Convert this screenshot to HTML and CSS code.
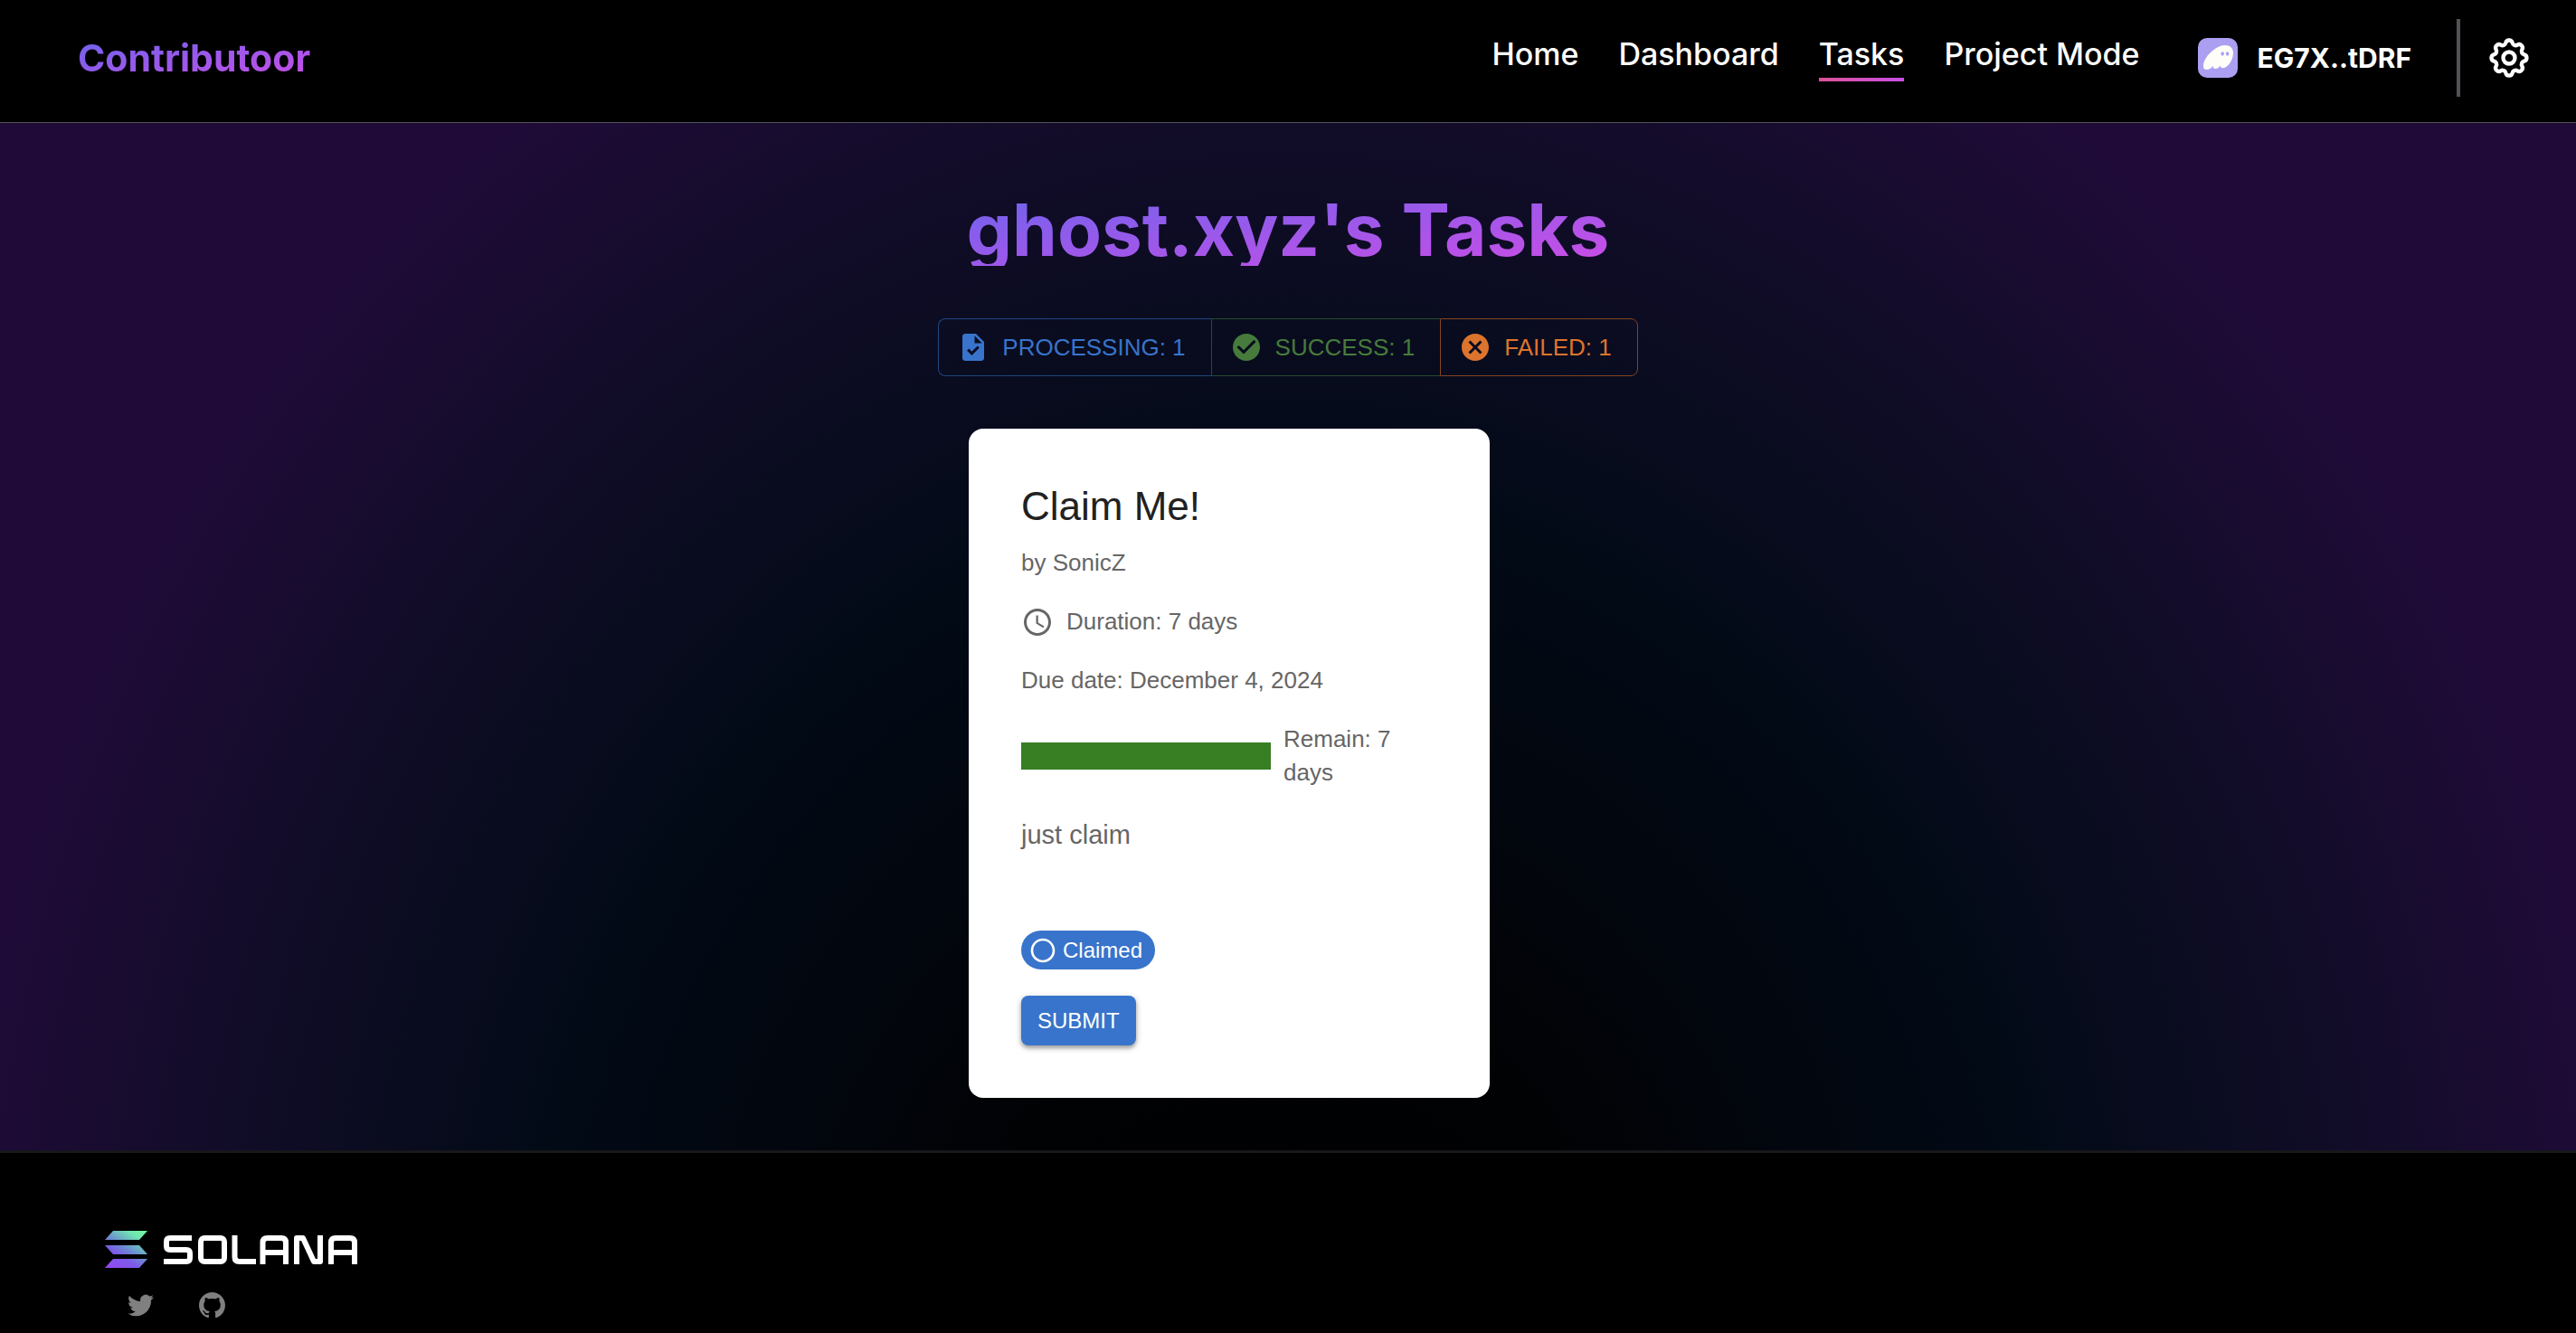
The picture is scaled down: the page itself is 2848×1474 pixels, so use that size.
FILE: index.html
```html
<!DOCTYPE html>
<html lang="en">
<head>
<meta charset="utf-8">
<meta name="viewport" content="width=device-width, initial-scale=1">
<title>Contributoor</title>
<link rel="stylesheet" href="styles.css">
</head>
<body>
<header class="header">
  <a class="brand gradient-text" href="#">Contributoor</a>
  <div class="header-right">
    <nav class="nav">
      <a href="#">Home</a>
      <a href="#">Dashboard</a>
      <a href="#" class="active">Tasks</a>
      <a href="#">Project Mode</a>
    </nav>
    <button class="wallet" type="button">
      <svg class="wallet-icon" viewBox="0 0 44 44" aria-hidden="true">
        <rect width="44" height="44" rx="10" fill="#ab9ff2"/>
        <path fill="#fffdf8" fill-rule="evenodd" d="M30 8C20 8 6 21 6 31c0 3 1.500 4 4 4 3 0 5.500-2.200 7-4.500-.6 2.500.5 3.500 2.500 3.500s4-1.500 5.200-3.500c.1 2 1.300 2.700 3 2.700C33.500 33 39 24 39 16.500 39 11 35.500 8 30 8Zm-2.800 7.200c1 0 1.700.9 1.700 2.200s-.7 2.200-1.700 2.200-1.700-.9-1.700-2.200.7-2.200 1.700-2.200Zm5.500 0c1 0 1.700.9 1.700 2.200s-.7 2.200-1.700 2.200-1.700-.9-1.700-2.200.7-2.200 1.700-2.200Z"/>
      </svg>
      <span>EG7X..tDRF</span>
    </button>
    <span class="divider"></span>
    <button class="icon-button" type="button" aria-label="Settings">
      <svg viewBox="0 0 24 24" fill="none" stroke="currentColor" stroke-width="2" stroke-linecap="round" stroke-linejoin="round"><path d="M10.325 4.317c.426-1.756 2.924-1.756 3.350 0a1.724 1.724 0 002.573 1.066c1.543-.94 3.310.826 2.370 2.370a1.724 1.724 0 001.065 2.572c1.756.426 1.756 2.924 0 3.350a1.724 1.724 0 00-1.066 2.573c.94 1.543-.826 3.310-2.370 2.370a1.724 1.724 0 00-2.572 1.065c-.426 1.756-2.924 1.756-3.350 0a1.724 1.724 0 00-2.573-1.066c-1.543.94-3.310-.826-2.370-2.370a1.724 1.724 0 00-1.065-2.572c-1.756-.426-1.756-2.924 0-3.350a1.724 1.724 0 001.066-2.573c-.94-1.543.826-3.310 2.370-2.370.996.608 2.296.07 2.572-1.065z"/><circle cx="12" cy="12" r="3"/></svg>
    </button>
  </div>
</header>

<main class="main">
  <h1 class="title gradient-text">ghost.xyz's Tasks</h1>
  <div class="filters" role="group" aria-label="Task status">
    <button class="filter processing" type="button">
      <svg viewBox="0 0 24 24" fill="currentColor" aria-hidden="true"><path d="M14 2H6c-1.100 0-1.990.9-1.990 2L4 20c0 1.100.89 2 1.990 2H18c1.100 0 2-.9 2-2V8l-6-6zm-3.060 16L7.400 14.460l1.410-1.410 2.120 2.120 4.240-4.240 1.410 1.410L10.940 18zM13 9V3.500L18.500 9H13z"/></svg>
      PROCESSING: 1
    </button>
    <button class="filter success" type="button">
      <svg viewBox="0 0 24 24" fill="currentColor" aria-hidden="true"><path d="M12 2C6.480 2 2 6.480 2 12s4.480 10 10 10 10-4.480 10-10S17.520 2 12 2zm-2 15l-5-5 1.410-1.410L10 14.170l7.590-7.590L19 8l-9 9z"/></svg>
      SUCCESS: 1
    </button>
    <button class="filter failed" type="button">
      <svg viewBox="0 0 24 24" fill="currentColor" aria-hidden="true"><path d="M12 2C6.470 2 2 6.470 2 12s4.470 10 10 10 10-4.470 10-10S17.530 2 12 2zm5 13.590L15.590 17 12 13.410 8.410 17 7 15.590 10.590 12 7 8.410 8.410 7 12 10.590 15.590 7 17 8.410 13.410 12 17 15.590z"/></svg>
      FAILED: 1
    </button>
  </div>
  <section class="cards">
    <article class="card">
      <h2>Claim Me!</h2>
      <p class="author">by SonicZ</p>
      <p class="duration">
        <svg viewBox="0 0 24 24" fill="currentColor" aria-hidden="true"><path d="M11.990 2C6.470 2 2 6.480 2 12s4.470 10 9.990 10C17.520 22 22 17.520 22 12S17.520 2 11.990 2zM12 20c-4.420 0-8-3.580-8-8s3.580-8 8-8 8 3.580 8 8-3.580 8-8 8zm.5-13H11v6l5.250 3.150.75-1.230-4.500-2.670z"/></svg>
        Duration: 7 days
      </p>
      <p class="due">Due date: December 4, 2024</p>
      <div class="remaining">
        <div class="track"><div class="fill" style="width:100%"></div></div>
        <p>Remain: 7 days</p>
      </div>
      <p class="description">just claim</p>
      <span class="chip">
        <svg viewBox="0 0 24 24" fill="currentColor" aria-hidden="true"><path d="M12 2C6.480 2 2 6.480 2 12s4.480 10 10 10 10-4.480 10-10S17.520 2 12 2zm0 18c-4.420 0-8-3.580-8-8s3.580-8 8-8 8 3.580 8 8-3.580 8-8 8z"/></svg>
        Claimed
      </span>
      <button class="submit" type="button">SUBMIT</button>
    </article>
  </section>
</main>

<footer class="footer">
  <a class="solana" href="#" aria-label="Solana">
    <svg viewBox="0 0 280 42" fill="none">
      <defs><linearGradient id="sol" gradientUnits="userSpaceOnUse" x1="40" y1="-3" x2="10" y2="45"><stop offset="0" stop-color="#73f7a2"/><stop offset=".18" stop-color="#70e6b0"/><stop offset=".48" stop-color="#6a8fd0"/><stop offset=".68" stop-color="#7d5ae8"/><stop offset="1" stop-color="#9348f5"/></linearGradient></defs>
      <path fill="url(#sol)" d="M9 0H47L38 10H0ZM0 16H38L47 26H9ZM9 31H47L38 41H0Z"/>
      <g stroke="#fff" stroke-width="6" stroke-linejoin="round">
        <path d="M96 8H72Q68 8 68 12V17Q68 21 72 21H90Q94 21 94 25V30Q94 34 90 34H65"/>
        <rect x="106" y="8" width="26" height="26" rx="4"/>
        <path d="M143.500 5V29Q143.500 34 148.500 34H167"/>
        <path d="M174.500 37V13Q174.500 8 179.500 8H195Q200 8 200 13V37M174.500 24H200"/>
        <path d="M212 37V8H219L231 34H238V5"/>
        <path d="M250 37V13Q250 8 255 8H271Q276 8 276 13V37M250 24H276"/>
      </g>
    </svg>
  </a>
  <div class="social">
    <a href="#" aria-label="Twitter"><svg viewBox="0 0 24 24" fill="currentColor"><path d="M23.953 4.570a10 10 0 01-2.825.775 4.958 4.958 0 002.163-2.723c-.951.555-2.005.959-3.127 1.184a4.920 4.920 0 00-8.384 4.482C7.690 8.095 4.067 6.130 1.640 3.162a4.822 4.822 0 00-.666 2.475c0 1.710.87 3.213 2.188 4.096a4.904 4.904 0 01-2.228-.616v.06a4.923 4.923 0 003.946 4.827 4.996 4.996 0 01-2.212.085 4.936 4.936 0 004.604 3.417 9.867 9.867 0 01-6.102 2.105c-.39 0-.779-.023-1.170-.067a13.995 13.995 0 007.557 2.209c9.053 0 13.998-7.496 13.998-13.985 0-.21 0-.42-.015-.63A9.935 9.935 0 0024 4.590z"/></svg></a>
    <a href="#" aria-label="GitHub"><svg viewBox="0 0 16 16" fill="currentColor"><path d="M8 0C3.580 0 0 3.580 0 8c0 3.540 2.290 6.530 5.470 7.590.4.070.55-.17.55-.38 0-.19-.01-.82-.01-1.490-2.010.37-2.530-.49-2.690-.94-.09-.23-.48-.94-.82-1.130-.28-.15-.68-.52-.01-.53.63-.01 1.080.58 1.230.82.72 1.210 1.870.87 2.330.66.07-.52.28-.87.51-1.070-1.780-.2-3.640-.89-3.640-3.950 0-.87.31-1.590.82-2.150-.08-.2-.36-1.020.08-2.120 0 0 .67-.21 2.200.82.64-.18 1.320-.27 2-.27s1.360.09 2 .27c1.530-1.040 2.200-.82 2.200-.82.44 1.100.16 1.920.08 2.120.51.56.82 1.270.82 2.150 0 3.070-1.870 3.750-3.650 3.950.29.25.54.73.54 1.480 0 1.070-.01 1.930-.01 2.200 0 .21.15.46.55.38A8.013 8.013 0 0016 8c0-4.420-3.580-8-8-8z"/></svg></a>
  </div>
</footer>
</body>
</html>
```
FILE: styles.css
```css
* { box-sizing: border-box; margin: 0; }
body {
  background: #000;
  color: #fff;
  font-family: Inter, sans-serif;
  font-size: 28px;
}
a { color: inherit; text-decoration: none; }
button { font: inherit; border: 0; cursor: pointer; }
svg { display: block; flex: none; }

.gradient-text {
  background: linear-gradient(to bottom right, #6a64ee, #cc4de6);
  -webkit-background-clip: text;
  background-clip: text;
  color: transparent;
}

.header {
  display: flex;
  justify-content: space-between;
  height: 136px;
  padding: 0 48px 0 86px;
  border-bottom: 1px solid #52525b;
}
.brand {
  align-self: center;
  margin-bottom: 8px;
  font-size: 41px;
  line-height: 56px;
  font-weight: 700;
}
.header-right { display: flex; align-items: center; padding-bottom: 8px; }
.nav { display: flex; gap: 44px; }
.nav a {
  padding-bottom: 4px;
  border-bottom: 4px solid transparent;
  font-size: 34px;
  line-height: 44px;
  font-weight: 500;
}
.nav .active { border-image: linear-gradient(to right, #dd5295, #c94fe8) 1; }
.wallet {
  display: flex;
  align-items: center;
  gap: 22px;
  margin-left: 64px;
  padding: 0;
  background: none;
  color: #fff;
  font-size: 30px;
  font-weight: 700;
}
.wallet-icon { width: 44px; height: 44px; }
.divider { width: 4px; height: 86px; margin-left: 50px; background: #52525b; }
.icon-button { margin-left: 28px; padding: 0; background: none; color: #fff; }
.icon-button svg { width: 52px; height: 52px; }

.main {
  display: flex;
  flex-direction: column;
  align-items: center;
  padding: 70px 48px 58px;
  background: radial-gradient(52% 148% at 50% 120%, #000 0%, #010204 24%, #02060e 40%, #020a16 56%, #0b0c21 71%, #130c2a 83%, #200b38 100%);
}
.title {
  padding: 8px 0 0;
  font-size: 80px;
  line-height: 80px;
  font-weight: 700;
}
.filters {
  display: flex;
  margin-top: 58px;
  font-family: "Liberation Sans", Arial, sans-serif;
}
.filter {
  display: flex;
  align-items: center;
  gap: 14px;
  height: 64px;
  padding: 0 28px 0 20px;
  border: 1px solid;
  background: none;
  font-size: 26px;
}
.filter svg { width: 36px; height: 36px; }
.processing { border-color: #1f4680; border-right: 0; border-radius: 8px 0 0 8px; color: #3874cb; }
.success { border-color: #294a30; border-right: 0; color: #467b3b; }
.failed { border-color: #82451f; border-radius: 0 8px 8px 0; color: #dd742d; }

.cards {
  display: grid;
  grid-template-columns: 576px;
  margin-top: 58px;
  padding-right: 130px;
}
.card {
  display: flex;
  flex-direction: column;
  align-items: flex-start;
  padding: 58px;
  border-radius: 16px;
  background: #fff;
  color: #666;
  font-family: "Liberation Sans", Arial, sans-serif;
  font-size: 26px;
  line-height: 37px;
}
.card h2 { color: #212121; font-size: 44px; line-height: 56px; font-weight: 400; }
.author { margin-top: 16px; }
.duration { display: flex; align-items: center; gap: 14px; margin-top: 28px; }
.duration svg { width: 36px; height: 36px; }
.due { margin-top: 28px; }
.remaining { display: flex; align-items: center; align-self: stretch; gap: 14px; margin-top: 28px; }
.track { flex: 0 0 276px; height: 30px; background: #ddd; }
.fill { height: 100%; background: #387e22; }
.description { margin-top: 28px; font-size: 29px; line-height: 44px; }
.chip {
  display: flex;
  align-items: center;
  gap: 6px;
  height: 43px;
  margin-top: 84px;
  padding: 0 14px 0 8px;
  border-radius: 24px;
  background: #3874cb;
  color: #fff;
  font-size: 24px;
}
.chip svg { width: 32px; height: 32px; }
.submit {
  height: 55px;
  margin-top: 29px;
  padding: 0 18px;
  border-radius: 8px;
  background: #3874cb;
  box-shadow: 0 3px 4px rgba(0, 0, 0, .3), 0 2px 8px rgba(0, 0, 0, .16);
  color: #fff;
  font-size: 24px;
}

.footer { padding: 86px 116px 16px; border-top: 3px solid #18181b; }
.solana { display: block; width: 280px; }
.social { display: flex; gap: 50px; padding: 26px 0 0 25px; color: #808080; }
.social svg { width: 29px; height: 29px; }
```
